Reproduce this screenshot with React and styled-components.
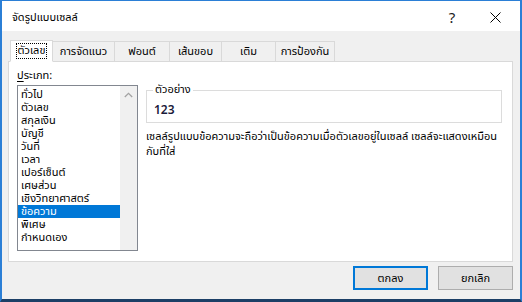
import styled, { createGlobalStyle } from 'styled-components';

const GlobalStyle = createGlobalStyle`
	html, body {
		margin: 0;
		padding: 0;
		background: #ffffff;
	}
	* {
		box-sizing: border-box;
	}
`;

const tabs = [
	{ label: 'ตัวเลข', width: 43 },
	{ label: 'การจัดแนว', width: 63 },
	{ label: 'ฟอนต์', width: 56 },
	{ label: 'เส้นขอบ', width: 53 },
	{ label: 'เติม', width: 55 },
	{ label: 'การป้องกัน', width: 60 },
];

const categories = [
	'ทั่วไป',
	'ตัวเลข',
	'สกุลเงิน',
	'บัญชี',
	'วันที่',
	'เวลา',
	'เปอร์เซ็นต์',
	'เศษส่วน',
	'เชิงวิทยาศาสตร์',
	'ข้อความ',
	'พิเศษ',
	'กำหนดเอง',
];

const App = () => {
	return (
		<>
			<GlobalStyle />
			<Window>
				<TitleBar>
					<Title>จัดรูปแบบเซลล์</Title>
					<TitleButtons>
						<HelpButton>?</HelpButton>
						<CloseButton>
							<svg width="11" height="11" viewBox="0 0 11 11">
								<path d="M0.5 0.5 L10.5 10.5 M10.5 0.5 L0.5 10.5" stroke="#000" strokeWidth="1" />
							</svg>
						</CloseButton>
					</TitleButtons>
				</TitleBar>
				<Body>
					<TabRow>
						{tabs.map((t, i) => (
							<Tab key={t.label} $width={t.width} $active={i === 0}>
								{i === 0 ? <FocusLabel>{t.label}</FocusLabel> : t.label}
							</Tab>
						))}
					</TabRow>
					<Panel>
						<LeftColumn>
							<FieldLabel><u>ป</u>ระเภท:</FieldLabel>
							<ListBox>
								<Items>
									{categories.map((c) => (
										<Item key={c} $selected={c === 'ข้อความ'}>{c}</Item>
									))}
								</Items>
								<ScrollBar>
									<svg width="9" height="6" viewBox="0 0 9 6">
										<path d="M0.8 5 L4.5 1.3 L8.2 5" fill="none" stroke="#a3a3a3" strokeWidth="1.3" />
									</svg>
								</ScrollBar>
							</ListBox>
						</LeftColumn>
						<RightColumn>
							<SampleBox>
								<SampleLegend>ตัวอย่าง</SampleLegend>
								<SampleValue>123</SampleValue>
							</SampleBox>
							<Description>
								<Line>เซลล์รูปแบบข้อความจะถือว่าเป็นข้อความเมื่อตัวเลขอยู่ในเซลล์ เซลล์จะแสดงเหมือน</Line>
								<Line>กับที่ใส่</Line>
							</Description>
						</RightColumn>
					</Panel>
					<ButtonRow>
						<Button $primary>ตกลง</Button>
						<Button>ยกเลิก</Button>
					</ButtonRow>
				</Body>
			</Window>
		</>
	);
};

export default App;

const Window = styled.div`
	width: 522px;
	height: 302px;
	display: flex;
	flex-direction: column;
	border: 2px solid #2b7fd6;
	border-top-width: 1px;
	border-bottom: 3px solid #1c3f66;
	font-family: "Tahoma", "Noto Sans Thai", "Leelawadee UI", "Noto Sans", sans-serif;
	font-size: 11px;
	color: #000;
	background: #f0f0f0;
`;

const TitleBar = styled.div`
	height: 30px;
	background: #ffffff;
	display: flex;
	align-items: center;
	justify-content: space-between;
	padding-left: 10px;
`;

const Title = styled.span`
	font-size: 11px;
	margin-top: 2px;
`;

const TitleButtons = styled.div`
	display: flex;
	align-items: center;
	height: 100%;
`;

const HelpButton = styled.span`
	width: 40px;
	text-align: center;
	font-size: 15px;
	font-family: "Segoe UI", "Noto Sans", sans-serif;
	color: #222;
	margin-top: 2px;
`;

const CloseButton = styled.span`
	width: 46px;
	display: flex;
	justify-content: center;
	margin-top: 2px;
	margin-right: 2px;
`;

const Body = styled.div`
	flex: 1;
	display: flex;
	flex-direction: column;
	padding: 8px 7px 0 6px;
`;

const TabRow = styled.div`
	display: flex;
	align-items: flex-end;
	height: 22px;
	padding-left: 2px;
	position: relative;
	z-index: 1;
`;

const Tab = styled.div`
	width: ${(p) => p.$width}px;
	height: ${(p) => (p.$active ? 22 : 20)}px;
	margin-left: ${(p) => (p.$active ? 0 : -1)}px;
	display: flex;
	align-items: center;
	justify-content: center;
	background: ${(p) => (p.$active ? '#ffffff' : '#f0f0f0')};
	border: 1px solid #d9d9d9;
	border-bottom: ${(p) => (p.$active ? '1px solid #ffffff' : 'none')};
	margin-bottom: ${(p) => (p.$active ? -1 : 0)}px;
	white-space: nowrap;
`;

const FocusLabel = styled.span`
	outline: 1px dotted #000;
	padding: 0 1px;
	line-height: 14px;
`;

const Panel = styled.div`
	height: 201px;
	background: #ffffff;
	border: 1px solid #d9d9d9;
	display: flex;
	gap: 8px;
	padding: 7px 10px 0 8px;
`;

const LeftColumn = styled.div`
	display: flex;
	flex-direction: column;
	width: 121px;
`;

const FieldLabel = styled.div`
	height: 16px;
	line-height: 14px;

	u {
		text-underline-offset: 2px;
	}
`;

const ListBox = styled.div`
	height: 166px;
	border: 1px solid #828790;
	display: flex;
`;

const Items = styled.div`
	flex: 1;
	padding-top: 2px;
`;

const Item = styled.div`
	height: 13px;
	line-height: 13px;
	padding-left: 3px;
	white-space: nowrap;
	background: ${(p) => (p.$selected ? '#0078d7' : 'transparent')};
	color: ${(p) => (p.$selected ? '#ffffff' : '#000')};
`;

const ScrollBar = styled.div`
	width: 17px;
	background: #f0f0f0;
	display: flex;
	justify-content: center;
	padding-top: 6px;
`;

const RightColumn = styled.div`
	flex: 1;
	display: flex;
	flex-direction: column;
	padding-top: 21px;
`;

const SampleBox = styled.div`
	height: 33px;
	border: 1px solid #dcdcdc;
	position: relative;
	padding: 11px 0 0 7px;
`;

const SampleLegend = styled.span`
	position: absolute;
	top: -8px;
	left: 6px;
	padding: 0 2px;
	background: #ffffff;
	line-height: 14px;
`;

const SampleValue = styled.div`
	font-weight: 600;
	font-size: 12px;
	color: #1b1b3a;
	line-height: 16px;
`;

const Description = styled.div`
	margin-top: 6px;
	line-height: 15px;
`;

const Line = styled.div`
	white-space: nowrap;
`;

const ButtonRow = styled.div`
	display: flex;
	justify-content: flex-end;
	gap: 10px;
	padding-top: 4px;
`;

const Button = styled.div`
	width: 75px;
	height: 24px;
	display: flex;
	align-items: center;
	justify-content: center;
	background: #e1e1e1;
	border: ${(p) => (p.$primary ? '2px solid #0078d7' : '1px solid #adadad')};
`;
